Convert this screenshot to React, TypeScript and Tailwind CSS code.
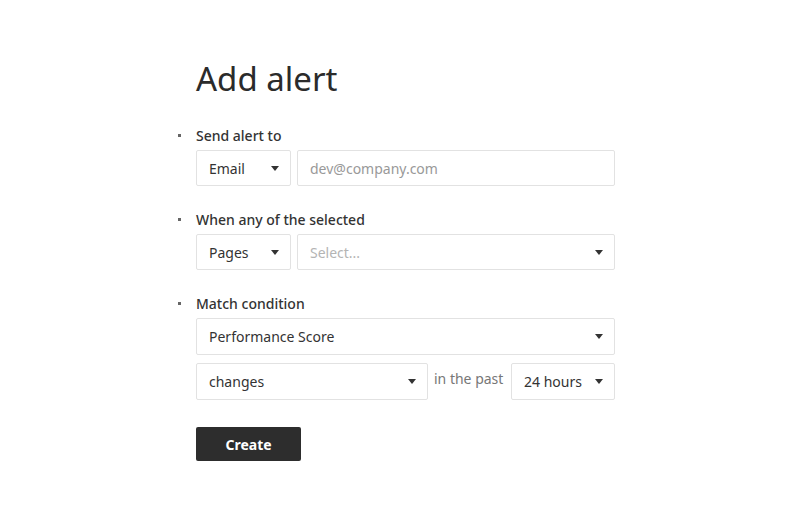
import React from 'react'

function Caret() {
  return (
    <svg width="8" height="5" viewBox="0 0 8 5" className="shrink-0">
      <path d="M0 0h8L4 5z" fill="#333" />
    </svg>
  )
}

function SelectBox({ label, placeholder, className }: { label: string; placeholder?: boolean; className: string }) {
  return (
    <div className={`border border-[#e2e2e2] rounded-[2px] bg-white flex items-center justify-between pl-3 pr-[11px] ${className}`}>
      <span className={placeholder ? 'text-[#b4b4b4]' : 'text-[#333]'}>{label}</span>
      <Caret />
    </div>
  )
}

function Section({ label, children }: { label: string; children: React.ReactNode }) {
  return (
    <li className="flex flex-col">
      <div className="flex items-center h-5">
        <span className="w-[3px] h-[3px] bg-[#666] mr-[15px]" />
        <span className="font-medium text-[#333]">{label}</span>
      </div>
      <div className="pl-[18px] mt-[5px] flex flex-col gap-2">{children}</div>
    </li>
  )
}

export default function App() {
  return (
    <div className="w-[800px] h-[530px] bg-white text-[14px] text-[#333]" style={{ fontFamily: '"Noto Sans", "Open Sans", sans-serif' }}>
      <div className="pl-[178px] pt-[55px] w-[615px]">
        <h1 className="pl-[18px] text-[33px] leading-[48px] text-[#2b2b2b] font-normal">Add alert</h1>
        <ul className="mt-[22px] flex flex-col gap-[23px]">
          <Section label="Send alert to">
            <div className="flex gap-[6px]">
              <SelectBox label="Email" className="h-9 w-[95px]" />
              <div className="h-9 flex-1 border border-[#e2e2e2] rounded-[2px] flex items-center pl-3 text-[#999]">dev@company.com</div>
            </div>
          </Section>
          <Section label="When any of the selected">
            <div className="flex gap-[6px]">
              <SelectBox label="Pages" className="h-9 w-[95px]" />
              <SelectBox label="Select..." placeholder className="h-9 flex-1" />
            </div>
          </Section>
          <Section label="Match condition">
            <SelectBox label="Performance Score" className="h-[37px] w-full" />
            <div className="flex items-center gap-[6px]">
              <SelectBox label="changes" className="h-[37px] w-[232px]" />
              <span className="text-[#777] -mt-[6px] whitespace-nowrap">in the past</span>
              <SelectBox label="24 hours" className="h-[37px] w-[104px] ml-auto" />
            </div>
          </Section>
        </ul>
        <div className="pl-[18px] mt-[27px]">
          <button className="w-[105px] h-[34px] rounded-[2px] bg-[#2d2d2d] text-white font-bold">Create</button>
        </div>
      </div>
    </div>
  )
}
